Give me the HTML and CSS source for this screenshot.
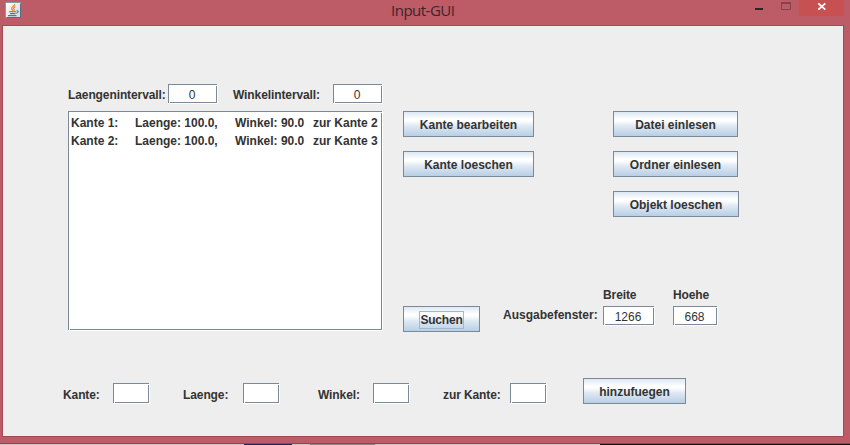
FILE: index.html
```html
<!DOCTYPE html>
<html lang="de">
<head>
<meta charset="utf-8">
<title>Input-GUI</title>
<link rel="stylesheet" href="styles.css">
</head>
<body>
<div class="window">
  <header class="titlebar">
    <svg class="app-icon" width="16" height="16" viewBox="0 0 16 16">
      <defs><linearGradient id="tile" x1="0" y1="0" x2="1" y2="1"><stop offset="0" stop-color="#fff"/><stop offset="1" stop-color="#cfd9de"/></linearGradient></defs>
      <rect x=".5" y=".5" width="15" height="15" rx="1" fill="url(#tile)" stroke="#7d9cab"/>
      <path d="M15.5 2v13.5H2" fill="none" stroke="#4f7185"/>
      <path d="M9.8 2.2C9.5 4 6.3 5 6.6 6.6c.2 1 1.2 1.2 1.2 2.4M10.4 4.6C8.6 5.4 8.2 6.4 9 7.2c.5.7.2 1.2-.3 1.6" fill="none" stroke="#e88328" stroke-width="1.2"/>
      <path d="M4 9.7h7M5 11.6h5.5M3 13.6h8.5M11.5 9c2.4-.6 2.2 1.8-.3 2.3" fill="none" stroke="#54788d" stroke-width="1.1"/>
    </svg>
    <h1 class="title">Input-GUI</h1>
    <div class="controls">
      <svg class="glyph" width="50" height="16" viewBox="0 0 50 16">
        <rect x="6" y="8" width="8" height="2" fill="#2b2529"/>
        <path d="M32.5 3v6.5h9V3" fill="none" stroke="#834450"/>
        <rect x="32" y="2" width="10" height="2" fill="#834450"/>
      </svg>
      <div class="close">
        <svg class="glyph" width="45" height="16" viewBox="0 0 45 16"><path d="M19.3 3.3l7 6.4M26.3 3.3l-7 6.4" stroke="#fff" stroke-width="1.8"/></svg>
      </div>
    </div>
  </header>
  <main class="client">
    <div class="intervals">
      <label>Laengenintervall:</label><span class="field">0</span>
      <label>Winkelintervall:</label><span class="field">0</span>
    </div>
    <div class="middle">
      <div class="list">
        <div class="item"><span>Kante 1:</span><span>Laenge: 100.0,</span><span>Winkel: 90.0</span><span>zur Kante 2</span></div>
        <div class="item"><span>Kante 2:</span><span>Laenge: 100.0,</span><span>Winkel: 90.0</span><span>zur Kante 3</span></div>
      </div>
      <div class="actions">
        <div class="action-columns">
          <div class="column edges">
            <button>Kante bearbeiten</button>
            <button>Kante loeschen</button>
          </div>
          <div class="column files">
            <button>Datei einlesen</button>
            <button>Ordner einlesen</button>
            <button class="wide">Objekt loeschen</button>
          </div>
        </div>
        <div class="output">
          <span></span><span></span><label>Breite</label><label>Hoehe</label>
          <button class="search"><span class="focus">Suchen</span></button>
          <label class="caption">Ausgabefenster:</label>
          <span class="field size-w">1266</span>
          <span class="field size-h">668</span>
        </div>
      </div>
    </div>
    <div class="add-row">
      <label>Kante:</label><span class="field"></span>
      <label>Laenge:</label><span class="field"></span>
      <label>Winkel:</label><span class="field"></span>
      <label>zur Kante:</label><span class="field"></span>
      <button>hinzufuegen</button>
    </div>
  </main>
</div>
<div class="desktop"></div>
</body>
</html>
```
FILE: styles.css
```css
* { box-sizing: border-box; }

body {
  margin: 0;
  width: 850px;
  height: 445px;
  overflow: hidden;
  background: #eee;
  color: #333;
  font: bold 12px/16px "Liberation Sans", Arial, sans-serif;
}

.window {
  height: 444px;
  padding: 0 6px 7px 2px;
  background: #bd5b66;
  border-bottom: 1px solid #8f4650;
}

.titlebar {
  display: grid;
  grid-template-columns: 16px 1fr 105px;
  height: 25px;
  padding-left: 3px;
}

.app-icon { display: block; margin-top: 2px; }

.title {
  margin: 0 0 0 370px;
  font: 15px/21px "Open Sans", "Noto Sans", sans-serif;
  letter-spacing: -0.5px;
  color: #3b262c;
  white-space: nowrap;
}

.controls { display: flex; width: 95px; margin-left: 10px; }
.glyph { display: block; flex: none; }
.close { width: 45px; height: 16px; background: #c75050; }

.client {
  height: 412px;
  padding-top: 58px;
  border: 1px solid #a04a55;
  background: #eee;
}

label { white-space: pre; letter-spacing: -0.1px; }

.intervals {
  display: grid;
  grid-template-columns: 100px 65px 100px 50px;
  align-items: center;
  height: 20px;
  margin-left: 65px;
}

.intervals label { padding-top: 2px; letter-spacing: -0.1px; }

.field {
  display: block;
  width: 50px;
  height: 20px;
  padding-right: 2px;
  font-weight: normal;
  line-height: 22px;
  text-align: center;
  background:
    linear-gradient(#eee, #eee) 100% 0 / 1px 1px,
    linear-gradient(#eee, #eee) 0 100% / 1px 1px,
    linear-gradient(#7a8a99, #7a8a99) 0 0 / calc(100% - 1px) 1px,
    linear-gradient(#7a8a99, #7a8a99) 0 0 / 1px calc(100% - 1px),
    linear-gradient(#7a8a99, #7a8a99) right 1px bottom 1px / 1px calc(100% - 3px),
    linear-gradient(#7a8a99, #7a8a99) right 1px bottom 1px / calc(100% - 3px) 1px,
    #fff;
  background-repeat: no-repeat;
}

.middle { display: flex; margin: 7px 0 0 65px; }

.list {
  width: 315px;
  height: 220px;
  padding: 3px;
  background:
    linear-gradient(#eee, #eee) 100% 0 / 1px 1px,
    linear-gradient(#eee, #eee) 0 100% / 1px 1px,
    linear-gradient(#7a8a99, #7a8a99) 0 0 / calc(100% - 1px) 1px,
    linear-gradient(#7a8a99, #7a8a99) 0 0 / 1px calc(100% - 1px),
    linear-gradient(#7a8a99, #7a8a99) right 1px bottom 1px / 1px calc(100% - 3px),
    linear-gradient(#7a8a99, #7a8a99) right 1px bottom 1px / calc(100% - 3px) 1px,
    #fff;
  background-repeat: no-repeat;
}

.item {
  display: grid;
  grid-template-columns: 64px 100px 78px auto;
  height: 18px;
  line-height: 18px;
  white-space: nowrap;
}

.actions {
  display: flex;
  flex-direction: column;
  justify-content: space-between;
  height: 221px;
  margin-left: 20px;
}

.action-columns { display: flex; gap: 79px; }
.column { display: flex; flex-direction: column; gap: 14px; }
.edges button { width: 131px; }
.files button { width: 125px; }
.files .wide { width: 126px; }

button {
  height: 26px;
  padding: 1px 0 0;
  border: 1px solid #7a8a99;
  color: #333;
  font: inherit;
  white-space: nowrap;
  background: linear-gradient(#dde8f3 0%, #fff 30%, #fff 36%, #dce7f2 60%, #b8cfe5 100%);
}

.output {
  display: grid;
  grid-template-columns: 100px 100px 70px 45px;
  grid-template-rows: 19px 26px;
}

.caption { margin-top: 1px; letter-spacing: 0; }
.search { width: 77px; }

.focus {
  display: block;
  width: 45px;
  height: 18px;
  margin: 0 auto;
  border: 1px solid #a3b8cc;
  line-height: 17px;
  letter-spacing: -0.2px;
}

.size-w { width: 52px; }
.size-h { width: 45px; }

.add-row {
  display: grid;
  grid-template-columns: 50px 70px 60px 75px 55px 70px 67px 73px 103px;
  align-items: start;
  margin: 46px 0 0 60px;
}

.add-row .field { width: 37px; height: 21px; margin-top: 5px; }
.add-row label { margin-top: 9px; }

.desktop {
  height: 1px;
  background: linear-gradient(90deg, #c8c4c4 244px, #1c2b5c 244px 292px, #c8c4c4 292px 310px, #8c8787 310px 375px, #c8c4c4 375px 600px, #111 600px);
}
```
